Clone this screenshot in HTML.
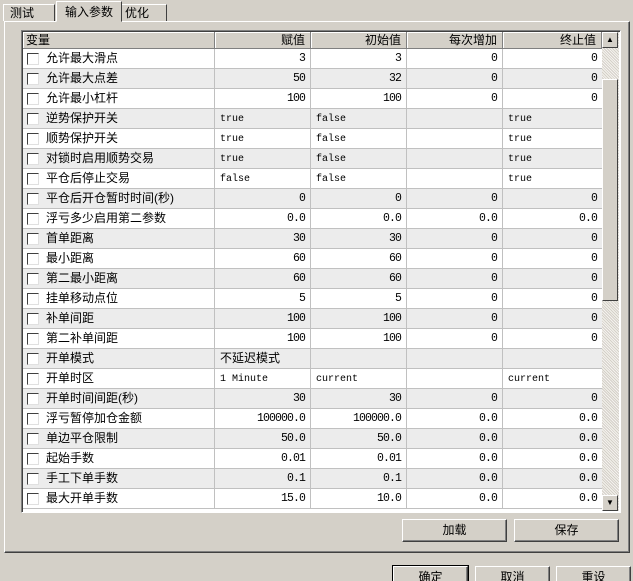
<!DOCTYPE html>
<html><head><meta charset="utf-8"><style>
*{margin:0;padding:0;box-sizing:border-box}
html,body{width:633px;height:581px;overflow:hidden}
body{background:#d4d0c8;position:relative;font-family:"Liberation Sans","WenQuanYi Zen Hei","Noto Sans CJK SC",sans-serif;font-size:12px;color:#000}
.tab{position:absolute;border:1px solid #fff;border-right:1px solid #404040;border-bottom:none;background:#d4d0c8;padding:0 0 0 6px;font-size:12px;line-height:15px}
.panel{position:absolute;left:4px;top:21px;width:626px;height:532px;border-top:1px solid #fff;border-left:1px solid #fff;border-right:1px solid #404040;border-bottom:1px solid #404040;box-shadow:inset -1px -1px 0 #808080}
.grid{position:absolute;left:21px;top:30px;width:600px;height:483px;border-top:1px solid #808080;border-left:1px solid #808080;border-right:1px solid #fff;border-bottom:1px solid #fff;box-shadow:inset 1px 1px 0 #404040;background:#fff;overflow:hidden}
.row{position:absolute;left:1px;height:20px;width:579px}
.c{position:absolute;top:0;height:20px;border-right:1px solid #c0c0c0;border-bottom:1px solid #c0c0c0;line-height:19px;white-space:nowrap;overflow:hidden}
.c1{left:0;width:192px;padding-left:23px}
.c2{left:192px;width:96px}.c3{left:288px;width:96px}.c4{left:384px;width:96px}.c5{left:480px;width:99px;border-right:none}
.n{text-align:right;padding-right:5px;font-family:"Liberation Mono",monospace;font-size:11.5px;letter-spacing:-0.9px;padding-top:1px;line-height:18px}
.t{padding-left:5px;font-family:"Liberation Mono",monospace;font-size:10px;padding-top:2px;line-height:17px}
.k{padding-left:5px}
.cb{position:absolute;left:4px;top:4px;width:12px;height:12px;border-top:1px solid #404040;border-left:1px solid #404040;border-right:1px solid #e0e0e0;border-bottom:1px solid #e0e0e0;background:#fff}
.g{background:#ececec}
.hdr{position:absolute;left:1px;top:1px;height:17px;width:579px;background:#d4d0c8}
.h{position:absolute;top:0;height:17px;border-right:1px solid #808080;border-bottom:1px solid #808080;box-shadow:inset 1px 1px 0 #fff;line-height:16px;text-align:right;padding-right:5px}
.btn{position:absolute;border-top:1px solid #fff;border-left:1px solid #fff;border-right:1px solid #404040;border-bottom:1px solid #404040;box-shadow:inset -1px -1px 0 #808080;background:#d4d0c8;text-align:center;line-height:20px;font-size:12px}
.sb{position:absolute;left:580px;top:1px;width:17px;height:479px;background-color:#e8e6e2;background-image:repeating-linear-gradient(45deg,#d4d0c8 0 1px,#f4f2ee 1px 2px)}
.sbb{position:absolute;left:0;width:16px;height:16px;background:#d4d0c8;border-top:1px solid #fff;border-left:1px solid #fff;border-right:1px solid #404040;border-bottom:1px solid #404040}
</style></head><body>
<div class="panel"></div>
<div class="tab" style="left:3px;top:4px;width:52px;height:17px;padding-top:1px">测试</div>
<div class="tab" style="left:121px;top:4px;width:46px;height:17px;padding-left:3px;padding-top:1px">优化</div>
<div class="tab" style="left:56px;top:1px;width:66px;height:21px;padding-left:8px;padding-top:3px;border-bottom:1px solid #d4d0c8">输入参数</div>
<div class="grid">
<div class="hdr">
<div class="h" style="left:0;width:192px;text-align:left;padding-left:3px">变量</div>
<div class="h" style="left:192px;width:96px">赋值</div>
<div class="h" style="left:288px;width:96px">初始值</div>
<div class="h" style="left:384px;width:96px">每次增加</div>
<div class="h" style="left:480px;width:99px">终止值</div>
</div>
<div id="rows"></div>
<div class="sb">
<div class="sbb" style="top:0;text-align:center;font-size:8px;line-height:14px">▲</div>
<div class="sbb" style="top:47px;height:222px"></div>
<div class="sbb" style="top:463px;text-align:center;font-size:8px;line-height:14px">▼</div>
</div>
</div>
<div class="btn" style="left:402px;top:519px;width:105px;height:23px">加载</div>
<div class="btn" style="left:514px;top:519px;width:105px;height:23px">保存</div>
<div class="btn" style="left:393px;top:566px;width:75px;height:23px;outline:1px solid #000">确定</div>
<div class="btn" style="left:475px;top:566px;width:75px;height:23px">取消</div>
<div class="btn" style="left:556px;top:566px;width:75px;height:23px">重设</div>
<script>
var d=[["允许最大滑点","3","3","0","0"],["允许最大点差","50","32","0","0"],["允许最小杠杆","100","100","0","0"],
["逆势保护开关","true","false","","true"],["顺势保护开关","true","false","","true"],["对锁时启用顺势交易","true","false","","true"],["平仓后停止交易","false","false","","true"],
["平仓后开仓暂时时间(秒)","0","0","0","0"],["浮亏多少启用第二参数","0.0","0.0","0.0","0.0"],["首单距离","30","30","0","0"],["最小距离","60","60","0","0"],["第二最小距离","60","60","0","0"],["挂单移动点位","5","5","0","0"],["补单间距","100","100","0","0"],["第二补单间距","100","100","0","0"],
["开单模式","K不延迟模式","","",""],["开单时区","1 Minute","current","","current"],["开单时间间距(秒)","30","30","0","0"],["浮亏暂停加仓金额","100000.0","100000.0","0.0","0.0"],["单边平仓限制","50.0","50.0","0.0","0.0"],["起始手数","0.01","0.01","0.0","0.0"],["手工下单手数","0.1","0.1","0.0","0.0"],["最大开单手数","15.0","10.0","0.0","0.0"]];
var h="";
d.forEach(function(r,i){
 var txt=(i>=3&&i<=6)||i==16;
 h+='<div class="row'+(i%2?' g':'')+'" style="top:'+(18+i*20)+'px"><div class="c c1"><div class="cb"></div>'+r[0]+'</div>';
 for(var j=1;j<5;j++){var v=r[j],cl;
  if(v.charAt(0)=="K"){v=v.slice(1);cl="k";}else cl=txt?"t":"n";
  h+='<div class="c c'+(j+1)+' '+cl+'">'+v+'</div>';}
 h+='</div>';});
document.getElementById("rows").innerHTML=h;
</script>
</body></html>
